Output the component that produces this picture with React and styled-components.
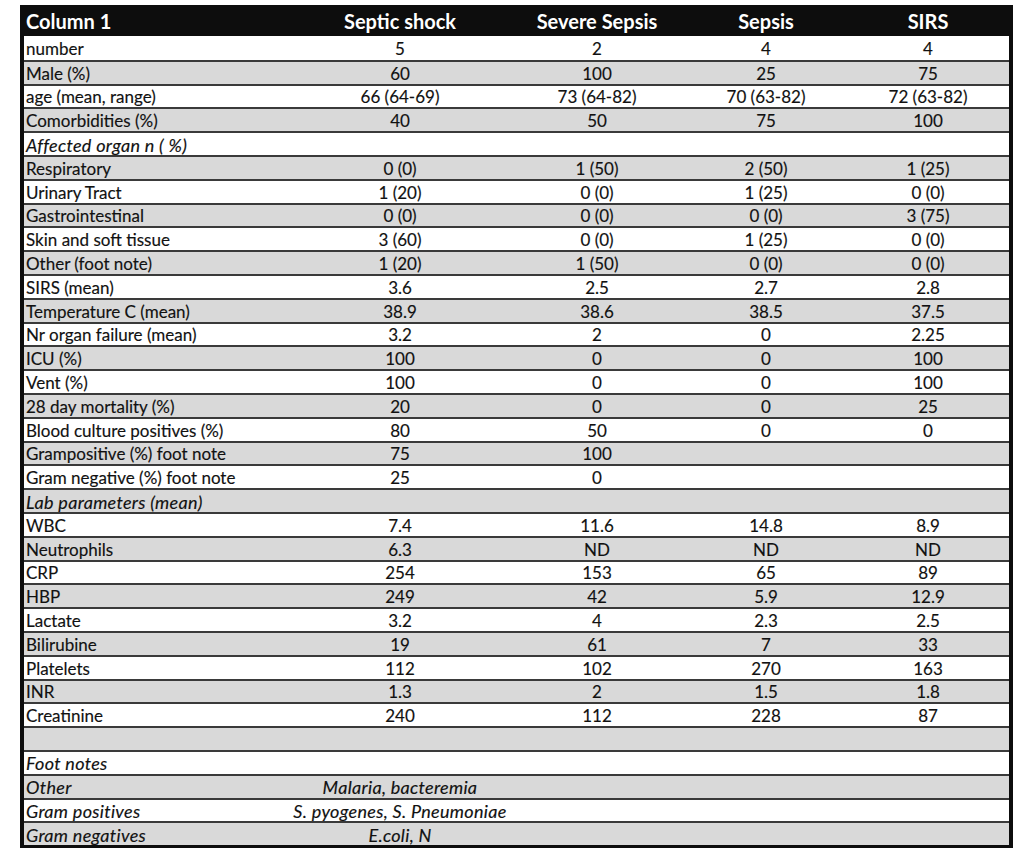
import React from 'react';
import styled, { createGlobalStyle } from 'styled-components';

const GlobalStyle = createGlobalStyle`
  body {
    margin: 0;
    background: #ffffff;
    font-family: Lato, "Open Sans", sans-serif;
  }
`;

const Page = styled.div`
  padding: 5px 11px 0 20px;
  width: 1024px;
  height: 862px;
  box-sizing: border-box;
`;

const Table = styled.div`
  width: 993px;
  box-sizing: border-box;
  border: 4px solid #0d0d0d;
  border-top: 0;
  border-bottom-width: 3px;
`;

const cols = '267px 218px 176px 162px 162px';

const Header = styled.div`
  display: grid;
  grid-template-columns: ${cols};
  height: 31px;
  background: #0d0d0d;
  color: #ffffff;
  font-weight: 700;
  font-size: 20px;
  align-items: center;
`;

const Row = styled.div`
  display: grid;
  grid-template-columns: ${cols};
  height: 23.8px;
  box-sizing: border-box;
  background: ${(p) => (p.$shade ? '#d9d9d9' : '#ffffff')};
  border-top: 2px solid #3a3a3a;
  font-size: 17px;
  color: #111111;
  -webkit-text-stroke: 0.15px #111111;
  align-items: center;
  font-style: ${(p) => (p.$italic ? 'italic' : 'normal')};
  &:first-of-type {
    border-top: 0;
  }
`;

const Cell = styled.div`
  display: flex;
  justify-content: ${(p) => (p.$left ? 'flex-start' : 'center')};
  padding-left: ${(p) => (p.$left ? '2px' : '0')};
  white-space: nowrap;
  line-height: 1;
  padding-top: 1px;
`;

const Note = styled.span`
  font-size: 18px;
  letter-spacing: 0.3px;
`;

const rows = [
  ['number', '5', '2', '4', '4'],
  ['Male (%)', '60', '100', '25', '75'],
  ['age (mean, range)', '66 (64-69)', '73 (64-82)', '70 (63-82)', '72 (63-82)'],
  ['Comorbidities (%)', '40', '50', '75', '100'],
  ['Affected organ n ( %)', '', '', '', '', true],
  ['Respiratory', '0 (0)', '1 (50)', '2 (50)', '1 (25)'],
  ['Urinary Tract', '1 (20)', '0 (0)', '1 (25)', '0 (0)'],
  ['Gastrointestinal', '0 (0)', '0 (0)', '0 (0)', '3 (75)'],
  ['Skin and soft tissue', '3 (60)', '0 (0)', '1 (25)', '0 (0)'],
  ['Other (foot note)', '1 (20)', '1 (50)', '0 (0)', '0 (0)'],
  ['SIRS (mean)', '3.6', '2.5', '2.7', '2.8'],
  ['Temperature C (mean)', '38.9', '38.6', '38.5', '37.5'],
  ['Nr organ failure (mean)', '3.2', '2', '0', '2.25'],
  ['ICU (%)', '100', '0', '0', '100'],
  ['Vent (%)', '100', '0', '0', '100'],
  ['28 day mortality (%)', '20', '0', '0', '25'],
  ['Blood culture positives (%)', '80', '50', '0', '0'],
  ['Grampositive (%) foot note', '75', '100', '', ''],
  ['Gram negative (%) foot note', '25', '0', '', ''],
  ['Lab parameters (mean)', '', '', '', '', true],
  ['WBC', '7.4', '11.6', '14.8', '8.9'],
  ['Neutrophils', '6.3', 'ND', 'ND', 'ND'],
  ['CRP', '254', '153', '65', '89'],
  ['HBP', '249', '42', '5.9', '12.9'],
  ['Lactate', '3.2', '4', '2.3', '2.5'],
  ['Bilirubine', '19', '61', '7', '33'],
  ['Platelets', '112', '102', '270', '163'],
  ['INR', '1.3', '2', '1.5', '1.8'],
  ['Creatinine', '240', '112', '228', '87'],
  ['', '', '', '', ''],
  ['Foot notes', '', '', '', '', true],
  ['Other', 'Malaria, bacteremia', '', '', '', true],
  ['Gram positives', 'S. pyogenes, S. Pneumoniae', '', '', '', true],
  ['Gram negatives', 'E.coli, N', '', '', '', true],
];

export default function App() {
  return (
    <Page>
      <GlobalStyle />
      <Table>
        <Header>
          <Cell $left>Column 1</Cell>
          <Cell>Septic shock</Cell>
          <Cell>Severe Sepsis</Cell>
          <Cell>Sepsis</Cell>
          <Cell>SIRS</Cell>
        </Header>
        <div>
          {rows.map((r, i) => (
            <Row key={i} $shade={i % 2 === 1} $italic={r[5]}>
              <Cell $left>{r[5] ? <Note>{r[0]}</Note> : r[0]}</Cell>
              <Cell>{r[5] ? <Note>{r[1]}</Note> : r[1]}</Cell>
              <Cell>{r[2]}</Cell>
              <Cell>{r[3]}</Cell>
              <Cell>{r[4]}</Cell>
            </Row>
          ))}
        </div>
      </Table>
    </Page>
  );
}
